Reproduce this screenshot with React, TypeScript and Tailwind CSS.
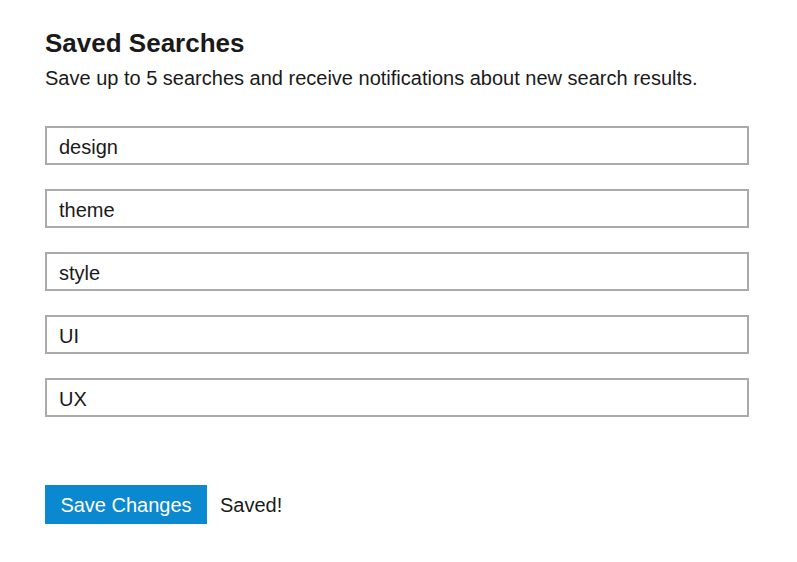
const searches = ['design', 'theme', 'style', 'UI', 'UX'];

export default function App() {
  return (
    <div className="min-h-screen bg-white px-[45px] pt-[27px] font-['Liberation_Sans',Arial,sans-serif] text-[#1a1a1a]">
      <h1 className="text-[26px] font-bold leading-[32px]">Saved Searches</h1>
      <p className="mt-[7px] text-[20px] leading-[24px]">Save up to 5 searches and receive notifications about new search results.</p>
      <div className="mt-[36px] flex w-[704px] flex-col gap-[24px]">
        {searches.map((s) => (
          <input
            key={s}
            defaultValue={s}
            className="h-[39px] w-full border-2 border-[#ababab] bg-white px-[12px] pt-[3px] text-[20px] text-[#1a1a1a] outline-none"
          />
        ))}
      </div>
      <div className="mt-[68px] flex items-center gap-[13px]">
        <button className="h-[39px] w-[162px] bg-[#0a88d0] pt-[1px] text-[20px] text-white">Save Changes</button>
        <span className="text-[20px]">Saved!</span>
      </div>
    </div>
  );
}
